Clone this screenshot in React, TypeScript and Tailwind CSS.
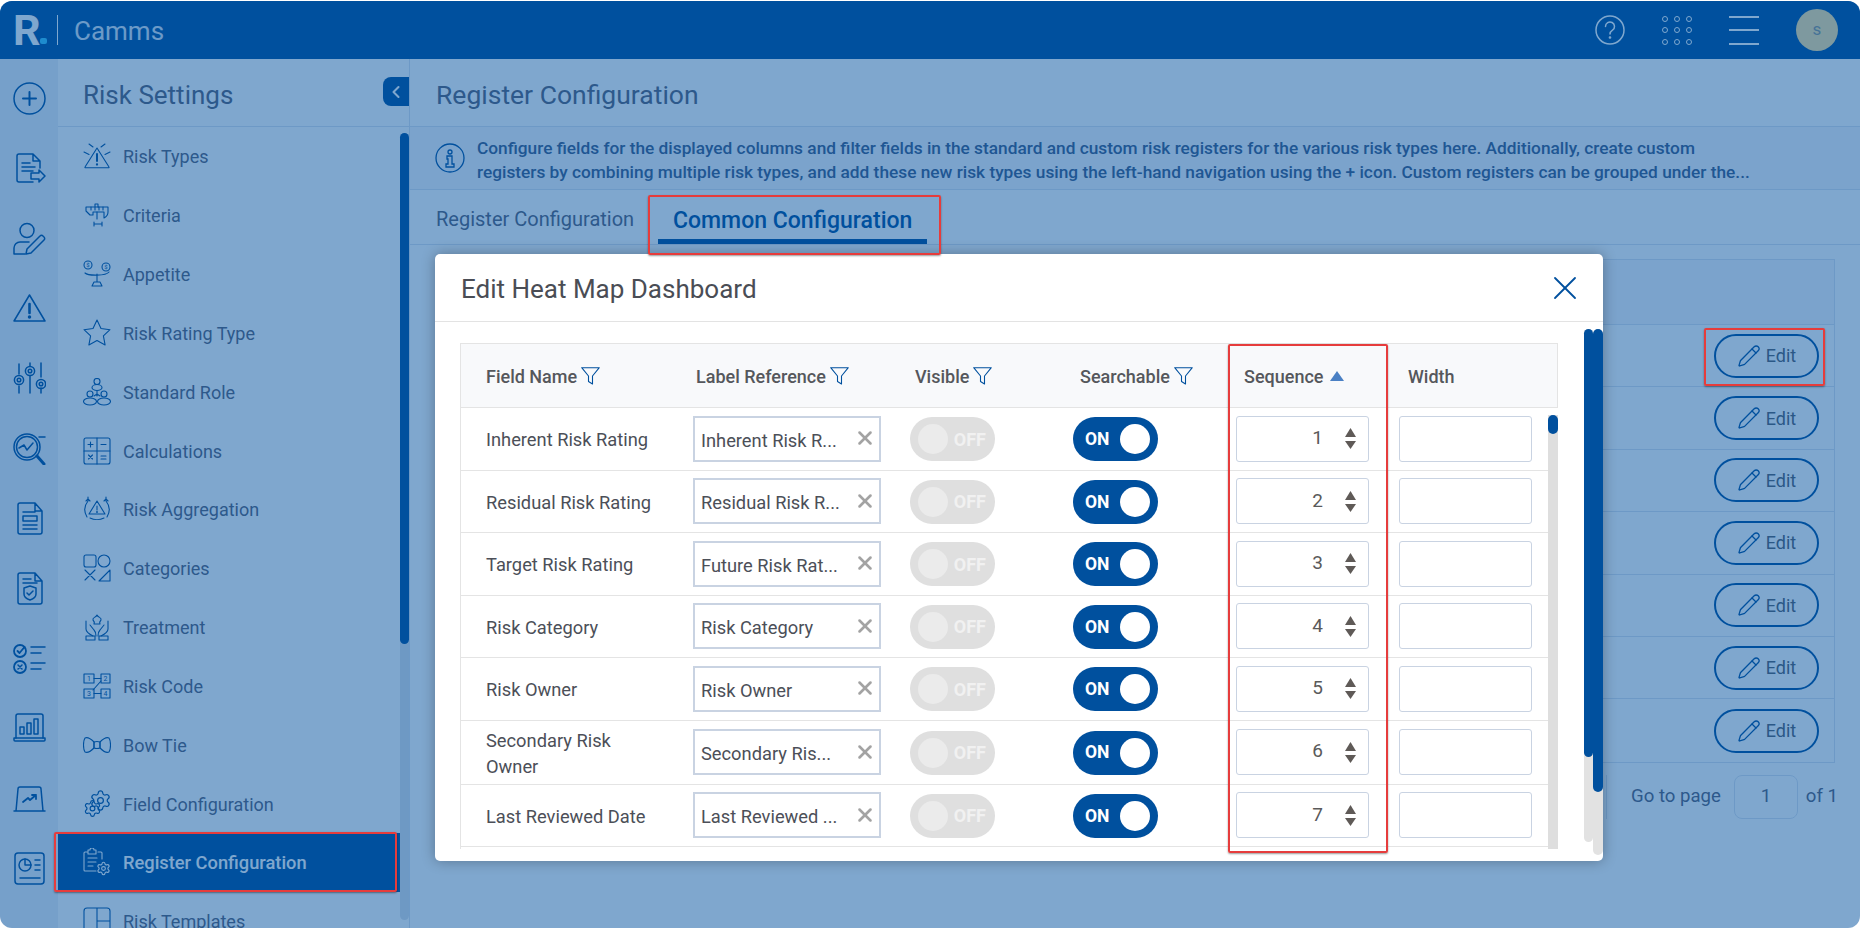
import React from "react";
import { ChevronLeft, Pencil, Settings, X } from "lucide-react";

const Rail = ({ children }: { children: React.ReactNode }) => (
  <div className="h-[70px] flex items-center justify-center text-[#00509e]">
    <svg width="33" height="33" viewBox="0 0 33 33" fill="none" stroke="currentColor" strokeWidth="1.5" strokeLinecap="round" strokeLinejoin="round">
      {children}
    </svg>
  </div>
);

const Ic = ({ children }: { children: React.ReactNode }) => (
  <svg width="28" height="28" viewBox="0 0 28 28" fill="none" stroke="currentColor" strokeWidth="1.1" strokeLinecap="round" strokeLinejoin="round" className="shrink-0">
    {children}
  </svg>
);

const railIcons = [
  <g key="plus"><circle cx="16.5" cy="16.5" r="15.5" /><path d="M16.5 10v13M10 16.5h13" strokeWidth="2" /></g>,
  <g key="doc"><path d="M27 16V9l-7-7H6a2 2 0 0 0-2 2v24a2 2 0 0 0 2 2h14M20 2v7h7M9 11h8M9 15h13M9 19h11" /><path d="M18 21h8v-3l6 6-6 6v-3h-8z" fill="#f0f3f8" /></g>,
  <g key="person"><circle cx="14" cy="8.5" r="7" /><path d="M1 32v-6a6 6 0 0 1 6-6h9M1 32h11" /><path d="M18 31l-5 1 1-5L27 14a2 2 0 0 1 3 0l1 1a2 2 0 0 1 0 3z" /></g>,
  <g key="warn"><path d="M16.5 3L32 29H1z" /><path d="M16.5 12v9" strokeWidth="2.6" /><circle cx="16.5" cy="25" r="1" fill="currentColor" /></g>,
  <g key="sliders"><path d="M6 2v10M6 24v7M17 1v3M17 14v17M28 1v14M28 26v5" /><circle cx="6" cy="18" r="4.6" /><circle cx="6" cy="18" r="1.8" /><circle cx="17" cy="9" r="4.6" /><circle cx="17" cy="9" r="1.8" /><circle cx="28" cy="22" r="4.6" /><circle cx="28" cy="22" r="1.8" /></g>,
  <g key="search"><circle cx="14" cy="15" r="13" /><circle cx="14" cy="15" r="10.5" /><path d="M6 16l5-3 3 5 6-7" /><path d="M24 24l7 8" strokeWidth="3" /><path d="M26 5h6" /></g>,
  <g key="doc2"><path d="M29 9v21a2 2 0 0 1-2 2H7a2 2 0 0 1-2-2V3a2 2 0 0 1 2-2h15zM22 1v8h7M10 10h12M10 27h14" /><rect x="10" y="14" width="14" height="5" /><path d="M10 23h14" /></g>,
  <g key="shield"><path d="M29 9v21a2 2 0 0 1-2 2H7a2 2 0 0 1-2-2V3a2 2 0 0 1 2-2h15zM22 1v8h7M10 7h8M10 11h14" /><path d="M17 14l6 2v6c0 3-3 5-6 6-3-1-6-3-6-6v-6z" /><path d="M14 21l2 2 4-4" /></g>,
  <g key="checks"><circle cx="7" cy="9" r="6" strokeWidth="1.8" /><path d="M4.5 9l2 2 5-6" strokeWidth="1.8" /><path d="M18 5h14M18 11h10" /><circle cx="7" cy="25" r="6" strokeWidth="1.8" /><path d="M5 23l4 4M9 23l-4 4" /><path d="M18 21h14M18 27h10" /></g>,
  <g key="bars"><path d="M3 26V4a2 2 0 0 1 2-2h23a2 2 0 0 1 2 2v22" /><path d="M1 26h31v2a1 1 0 0 1-1 1H2a1 1 0 0 1-1-1z" /><rect x="7" y="15" width="4" height="7" /><rect x="14" y="11" width="4" height="11" /><rect x="21" y="7" width="4" height="15" /></g>,
  <g key="trend"><path d="M3 29L5 7a2 2 0 0 1 2-2h19a2 2 0 0 1 2 2l2 22M1 29h31" /><path d="M10 20l5-4 2 2 6-5M19 13h4v4" strokeWidth="1.8" /></g>,
  <g key="report"><rect x="2" y="1" width="29" height="31" rx="3" /><circle cx="12" cy="13" r="6" /><path d="M12 7v6h6M22 8h5M22 13h5M22 18h5M7 26h20" /></g>,
];

const sideItems: [string, React.ReactNode][] = [
  ["Risk Types", <g key="a"><path d="M14 6l12 19a.5.5 0 0 1-.5.8H2.5a.5.5 0 0 1-.5-.8z" /><path d="M14 12v7" strokeWidth="2" /><circle cx="14" cy="22.5" r=".6" fill="currentColor" /><path d="M6 2l4 3M22 2l-4 3M1 10l5 2.500M27 10l-5 2.500" /></g>],
  ["Criteria", <g key="b"><path d="M3 6h22v5c0 3-2 5-4 6v-6H10v3H7l-4-4z" /><path d="M8 6v3M12 3v6M16 6v3M20 6v3M12 3h3v3M14 11v7M11 23h8M11 21v4M19 21v4" /></g>],
  ["Appetite", <g key="c"><path d="M2 13c3 3 21 3 24-1M14 14v8M9 26l2-4h6l2 4zM9 26h10" /><circle cx="5" cy="5" r="4" /><circle cx="23" cy="7" r="4" /><text x="5" y="7" fontSize="6" textAnchor="middle" fill="currentColor" stroke="none">$</text><text x="23" y="9" fontSize="6" textAnchor="middle" fill="currentColor" stroke="none">$</text></g>],
  ["Risk Rating Type", <g key="d"><path d="M14 1l4 8.500 9 1.200-6.600 6.200 1.700 9L14 21.500l-8.100 4.400 1.700-9L1 10.700l9-1.200z" /></g>],
  ["Standard Role", <g key="e"><circle cx="14" cy="3.500" r="3" /><ellipse cx="14" cy="9.500" rx="5" ry="3" /><circle cx="7" cy="16" r="3" /><ellipse cx="7" cy="23.500" rx="6.500" ry="3.500" /><circle cx="21" cy="16" r="3" /><ellipse cx="21" cy="23.500" rx="6.500" ry="3.500" /><path d="M14 13v5M14 16l-3 2M14 16l3 2" /></g>],
  ["Calculations", <g key="f"><rect x="1" y="1" width="26" height="26" rx="2" /><path d="M14 1v26M1 14h26M5 7.500h5M7.500 5v5M18 7.500h5M5.500 18l4 4M9.500 18l-4 4M18 19h5M18 22h5" /></g>],
  ["Risk Aggregation", <g key="g"><path d="M14 6l8 13H6z" /><path d="M14 11v4" /><circle cx="14" cy="17" r=".4" /><path d="M5 6C1 11 1 17 4 22M3 6l2-2 2 2M23 6c4 5 4 11 1 16M21 6l2-2 2 2M7 23c4 2 10 2 14 0M5 2v3M23 2v3" /></g>],
  ["Categories", <g key="h"><rect x="1" y="1" width="12" height="12" rx="2" /><circle cx="21" cy="7" r="6" /><path d="M2 16l10 10M12 16L2 26M27 16L16 27h11z" /></g>],
  ["Treatment", <g key="i"><path d="M10 7c-1-3 3-2 4-5 1 3 5 2 4 5-1 1-2 2-1 4h-6c1-2 0-3-1-4z" /><path d="M3 8v8c0 3 3 5 7 7M7 12l4 5c1 1 2 3 2 6M25 8v8c0 3-3 5-7 7M21 12l-4 5c-1 1-2 3-2 6" /><rect x="3" y="23" width="9" height="4" /><rect x="16" y="23" width="9" height="4" /></g>],
  ["Risk Code", <g key="j"><rect x="1" y="2" width="10" height="9" /><rect x="18" y="2" width="9" height="9" /><rect x="1" y="17" width="10" height="9" /><rect x="18" y="17" width="9" height="9" /><path d="M11 6.500h7M11 21.500h7M18 9l-8 9" /><text x="6" y="9" fontSize="7" textAnchor="middle" fill="currentColor" stroke="none">1</text><text x="22.500" y="9" fontSize="7" textAnchor="middle" fill="currentColor" stroke="none">2</text><text x="6" y="24" fontSize="7" textAnchor="middle" fill="currentColor" stroke="none">3</text><text x="22.500" y="24" fontSize="7" textAnchor="middle" fill="currentColor" stroke="none">4</text></g>],
  ["Bow Tie", <g key="k"><path d="M11 11C7 7 4 6 2 7 0 10 0 18 2 21c2 1 5 0 9-4zM17 11c4-4 7-5 9-4 2 3 2 11 0 14-2 1-5 0-9-4z" /><path d="M11 11c2-.7 4-.7 6 0v6c-2 .7-4 .7-6 0z" /></g>],
  ["Field Configuration", <g key="l"><Settings x="6" y="-1" width="23" height="23" strokeWidth="1.300" /><Settings x="0" y="9" width="19" height="19" strokeWidth="1.500" /></g>],
];

const rows = [
  { name: "Inherent Risk Rating", label: "Inherent Risk R...", h: "h-[62.5px]" },
  { name: "Residual Risk Rating", label: "Residual Risk R...", h: "h-[62.5px]" },
  { name: "Target Risk Rating", label: "Future Risk Rat...", h: "h-[62.5px]" },
  { name: "Risk Category", label: "Risk Category", h: "h-[62.5px]" },
  { name: "Risk Owner", label: "Risk Owner", h: "h-[62.5px]" },
  { name: "Secondary Risk Owner", label: "Secondary Ris...", h: "h-[64px]" },
  { name: "Last Reviewed Date", label: "Last Reviewed ...", h: "h-[62.5px]" },
];

const Funnel = () => (
  <svg width="19" height="18" viewBox="0 0 19 18" fill="none" stroke="#00509e" strokeWidth="1.1" strokeLinejoin="round" className="ml-[4px] shrink-0">
    <path d="M.7.7h17.600l-6.800 8.300v8l-4-2.500V9z" />
  </svg>
);

const Spinner = () => (
  <div className="flex flex-col gap-[4px] items-center">
    <svg width="11" height="9" viewBox="0 0 11 9"><path d="M5.500 0L11 9H0z" fill="#5f5a57" /></svg>
    <svg width="11" height="8" viewBox="0 0 11 8"><path d="M5.500 8L11 0H0z" fill="#5f5a57" /></svg>
  </div>
);

const EditBtn = () => (
  <div className="w-[105px] h-[44px] rounded-full border-2 border-[#00509e] flex items-center justify-center gap-[5px] text-[#56606f]">
    <Pencil size={24} strokeWidth={1.3} className="text-[#00509e]" />
    <span className="text-[18px]">Edit</span>
  </div>
);

export default function App() {
  return (
    <div className="relative w-[1860px] h-[928px] bg-white overflow-hidden pt-px font-['Roboto',sans-serif]">
      <div className="relative h-full rounded-[12px] overflow-hidden flex flex-col bg-white">
        <header className="h-[58px] shrink-0 bg-[#00509e] flex items-center pl-[13px] pr-[22px] text-white">
          <span className="text-[43px] font-bold leading-[50px] w-[27px] pb-[1px]">R</span>
          <span className="w-[7px] h-[6px] rounded-[2px] bg-[#3cc8ff] mt-[22px]" />
          <span className="w-px h-[30px] bg-white ml-[10px]" />
          <span className="text-[26px] ml-[16px] pt-[3px] text-[#d8e4f2]">Camms</span>
          <div className="ml-auto flex items-center">
            <svg width="30" height="30" viewBox="0 0 30 30" fill="none" stroke="white" strokeWidth="1.5">
              <circle cx="15" cy="15" r="14" />
              <path d="M10.500 11.500a4.500 4.500 0 1 1 7 3.700c-1.500 1-2.500 2-2.500 3.800" strokeLinecap="round" />
              <circle cx="15" cy="22.500" r=".6" fill="white" />
            </svg>
            <div className="ml-[37px] grid grid-cols-3 gap-x-[6px] gap-y-[5.500px]">
              {Array.from({ length: 9 }).map((_, i) => (
                <span key={i} className="w-[6px] h-[6px] rounded-full border border-white" />
              ))}
            </div>
            <div className="ml-[37px] w-[30px] flex flex-col gap-[11.500px]">
              <span className="h-[2px] bg-white" />
              <span className="h-[2px] bg-white" />
              <span className="h-[2px] bg-white" />
            </div>
            <div className="ml-[37px] w-[42px] h-[42px] rounded-full bg-[#fde3a0] flex items-center justify-center text-[17px] text-[#8c9590]">
              s
            </div>
          </div>
        </header>

        <div className="flex flex-1 min-h-0">
          <nav className="w-[58px] shrink-0 bg-[#edf0f6] pt-[4px]">
            {railIcons.map((icon, i) => (
              <Rail key={i}>{icon}</Rail>
            ))}
          </nav>

          <aside className="w-[352px] shrink-0 border-r border-[#dbe3ee] flex flex-col">
            <div className="h-[68px] shrink-0 border-b border-[#dbe3ee] flex items-center justify-between pl-[25px]">
              <span className="text-[26px] text-[#5b6278] pt-[5px]">Risk Settings</span>
              <div className="w-[26px] h-[29px] -mt-[2px] bg-[#00509e] rounded-l-[8px] flex items-center justify-center text-white">
                <ChevronLeft size={20} strokeWidth={2.5} />
              </div>
            </div>
            <div className="relative flex-1 min-h-0 overflow-hidden">
              <div className="absolute right-0 top-[6px] bottom-[8px] w-[9px] rounded-full bg-[#dde2ea]" />
              <div className="absolute right-0 top-[6px] h-[511px] w-[9px] rounded-full bg-[#00509e]" />
              {sideItems.map(([label, icon]) => (
                <div key={label} className="h-[58.830px] flex items-center gap-[12px] pl-[25px] mr-[9px] text-[18px] text-[#5b6278]">
                  <span className="text-[#00509e] flex"><Ic>{icon}</Ic></span>
                  <span className="pt-[1px]">{label}</span>
                </div>
              ))}
              <div className="h-[59px] flex items-center gap-[12px] pl-[25px] mr-[9px] bg-[#00509e] text-white font-medium text-[18.300px]">
                <Ic>
                  <path d="M19 11V5a1 1 0 0 0-1-1h-3M4 4H2a1 1 0 0 0-1 1v17a1 1 0 0 0 1 1h11M5 2h2a2 2 0 0 1 4 0h2v4H5zM5 10h9M5 14h8M5 18h5" />
                  <Settings x="13" y="13" width="15" height="15" strokeWidth="1.800" />
                </Ic>
                <span className="pt-[1px]">Register Configuration</span>
              </div>
              <div className="h-[59px] flex items-center gap-[12px] pl-[25px] mr-[9px] text-[18px] text-[#5b6278]">
                <span className="text-[#00509e] flex">
                  <Ic>
                    <path d="M1 31V4a3 3 0 0 1 3-3h20a3 3 0 0 1 3 3v27M14 1v30M14 14h13" />
                  </Ic>
                </span>
                Risk Templates
              </div>
            </div>
          </aside>

          <main className="flex-1 min-w-0 flex flex-col">
            <div className="h-[68px] shrink-0 border-b border-[#dbe3ee] flex items-center pl-[26px] pt-[5px] text-[26.500px] text-[#5b6278]">
              Register Configuration
            </div>
            <div className="h-[63px] shrink-0 bg-[#f6f6fa] border-b border-[#dbe3ee] flex items-center pl-[25px]">
              <svg width="30" height="30" viewBox="0 0 30 30" fill="none" stroke="#00509e" strokeWidth="1.3" className="shrink-0">
                <circle cx="15" cy="15" r="14" />
                <circle cx="15" cy="9" r="2" />
                <path d="M12 13h5v8h2v3h-8v-3h2v-5h-1z" />
              </svg>
              <p className="ml-[12px] text-[17.300px] leading-[24px] pt-[4px] font-medium text-[#3f5c88] whitespace-nowrap">
                Configure fields for the displayed columns and filter fields in the standard and custom risk registers for the various risk types here. Additionally, create custom
                <br />
                registers by combining multiple risk types, and add these new risk types using the left-hand navigation using the + icon. Custom registers can be grouped under the...
              </p>
            </div>
            <div className="h-[55px] shrink-0 border-b border-[#dbe3ee] flex pl-[26px]">
              <div className="h-full flex items-center pt-[4px] text-[20px] text-[#5b6278]">Register Configuration</div>
              <div className="ml-[24px] w-[269px] h-full flex items-center justify-center text-[23px] font-medium text-[#00509e] border-b-[5px] border-[#00509e] pt-[13px]">
                Common Configuration
              </div>
            </div>
            <div className="pl-[26px] pr-[22px] pt-[14px]">
              <div className="border border-[#dbe3ee] mr-[3px]">
                <div className="h-[65px] bg-[#f6f6fa] border-b border-[#dbe3ee]" />
                {[0, 1, 2, 3, 4, 5, 6].map((i) => (
                  <div key={i} className="h-[62.400px] border-b border-[#dbe3ee] last:border-b-0 flex items-center justify-end pr-[15px]">
                    <EditBtn />
                  </div>
                ))}
              </div>
              <div className="mt-[12px] flex items-center justify-end text-[18.600px] text-[#5b6278] whitespace-nowrap">
                <div className="h-[44px] flex items-center border-l border-[#dbe3ee] pl-[24px]">Go to page</div>
                <div className="ml-[13px] w-[64px] h-[44px] border border-[#dbe3ee] rounded-[8px] flex items-center justify-center">1</div>
                <div className="ml-[8px]">of 1</div>
              </div>
            </div>
          </main>
        </div>

        <div className="absolute inset-0 bg-[#00509e]/50" />
      </div>

      {/* modal */}
      <div className="absolute left-[435px] top-[254px] w-[1168px] h-[607px] bg-white rounded-[5px] shadow-[0_0_14px_rgba(0,0,0,0.3)] flex flex-col">
        <div className="h-[68px] shrink-0 border-b border-[#e3e3e3] flex items-center justify-between pl-[26px] pr-[18px]">
          <span className="text-[26px] text-[#4a4d55] pt-[3px]">Edit Heat Map Dashboard</span>
          <X size={40} strokeWidth={1.1} className="text-[#00509e]" />
        </div>
        <div className="ml-[25px] mt-[21px] w-[1098px] h-[506px] border-l border-t border-[#e4e4e4] relative overflow-hidden">
          <div className="h-[64px] bg-[#f8f9fb] border-b border-r border-[#e4e4e4] grid grid-cols-[225px_217px_163px_163px_163px_156px] items-center text-[18px] font-medium text-[#55575c]">
            <div className="pl-[25px] pt-[1px] flex items-center">Field Name<Funnel /></div>
            <div className="pl-[10px] pt-[1px] flex items-center">Label Reference<Funnel /></div>
            <div className="pl-[12px] pt-[1px] flex items-center">Visible<Funnel /></div>
            <div className="pl-[14px] pt-[1px] flex items-center">Searchable<Funnel /></div>
            <div className="pl-[15px] pt-[1px] flex items-center">
              Sequence
              <svg width="14" height="10" viewBox="0 0 14 10" className="ml-[7px]"><path d="M7 0l7 10H0z" fill="#4a80c4" /></svg>
            </div>
            <div className="pl-[16px] pt-[1px]">Width</div>
          </div>
          {rows.map((r, i) => (
            <div key={r.name} className={`${r.h} mr-[10px] border-b border-[#e4e4e4] grid grid-cols-[225px_217px_163px_163px_163px_156px] items-center text-[18.300px] text-[#4c4f58]`}>
              <div className="pl-[25px] pr-[30px] leading-[26px] pt-[3px]">{r.name}</div>
              <div className="pl-[7px]">
                <div className="w-[188px] h-[46px] border-2 border-[#c9d3e2] flex items-center justify-between pl-[6px] pr-[3px]">
                  <span className="pt-[3px]">{r.label}</span>
                  <X size={22} strokeWidth={2.8} className="text-[#a3a3a3] -mt-[1px]" />
                </div>
              </div>
              <div className="pl-[7px] pt-[1px]">
                <div className="w-[85px] h-[44px] rounded-full bg-[#dfdfdf] flex items-center pl-[8px] pr-[9px] justify-between">
                  <span className="w-[30px] h-[30px] rounded-full bg-[#ebebeb]" />
                  <span className="text-[18px] font-bold text-[#f1f1f1]">OFF</span>
                </div>
              </div>
              <div className="pl-[7px] pt-[1px]">
                <div className="w-[85px] h-[44px] rounded-full bg-[#00509e] flex items-center pl-[12px] pr-[8px] justify-between">
                  <span className="text-[17.500px] font-bold text-white">ON</span>
                  <span className="w-[30px] h-[30px] rounded-full bg-white" />
                </div>
              </div>
              <div className="pl-[7px]">
                <div className="w-[133px] h-[46px] border border-[#c9d3e2] rounded-[3px] flex items-center justify-end pr-[12px] text-[19px] text-[#5a5a5a]">
                  <span className="mr-[22px] -mt-[1px]">{i + 1}</span>
                  <Spinner />
                </div>
              </div>
              <div className="pl-[7px]">
                <div className="w-[133px] h-[46px] border border-[#c9d3e2] rounded-[3px]" />
              </div>
            </div>
          ))}
          <div className="absolute right-0 top-[71px] bottom-0 w-[10px] bg-[#dedede]" />
          <div className="absolute right-0 top-[71px] h-[19px] w-[10px] rounded-full bg-[#00509e]" />
        </div>

        {/* outer scrollbars */}
        <div className="absolute left-[1149px] top-[75px] h-[513px] w-[9px] rounded-full bg-[#e2e2e2]" />
        <div className="absolute left-[1149px] top-[75px] h-[428px] w-[9px] rounded-full bg-[#00509e]" />
        <div className="absolute left-[1158px] top-[75px] h-[526px] w-[10px] rounded-full bg-[#e2e2e2]" />
        <div className="absolute left-[1158px] top-[75px] h-[463px] w-[10px] rounded-full bg-[#00509e]" />
      </div>

      {/* annotation boxes */}
      <div className="absolute left-[54px] top-[832px] w-[343px] h-[60px] border-2 border-[#e63c3c] rounded-[2px] shadow-[0_1px_2px_rgba(0,0,0,0.4)]" />
      <div className="absolute left-[648px] top-[195px] w-[293px] h-[60px] border-2 border-[#e63c3c] rounded-[2px] shadow-[0_1px_2px_rgba(0,0,0,0.4)]" />
      <div className="absolute left-[1704px] top-[328px] w-[121px] h-[58px] border-2 border-[#e63c3c] rounded-[2px] shadow-[0_1px_2px_rgba(0,0,0,0.4)]" />
      <div className="absolute left-[1228px] top-[344px] w-[160px] h-[509px] border-2 border-[#e63c3c] rounded-[2px] shadow-[0_1px_2px_rgba(0,0,0,0.4)]" />
    </div>
  );
}
